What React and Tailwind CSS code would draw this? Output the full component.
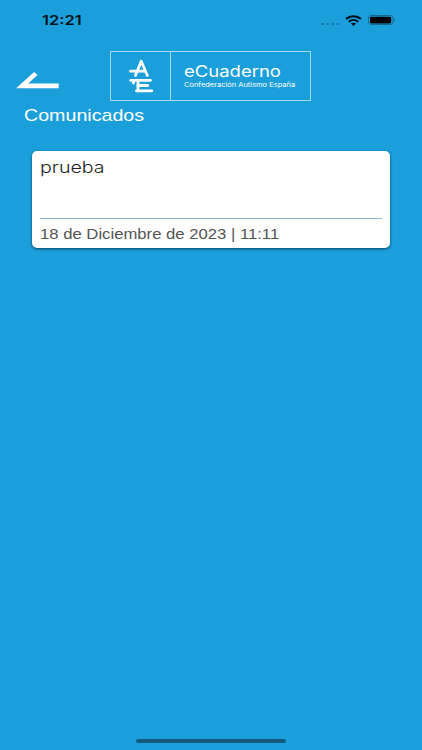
import React from "react";

const comunicados = [
  { id: 1, title: "prueba", date: "18 de Diciembre de 2023 | 11:11" },
];

const StatusBar = () => {
  return (
    <div className="flex h-10 items-center justify-between pl-[42px] pr-[26px]">
      <span className="mt-[2px] origin-left scale-x-[1.22] font-['Inter'] text-[13.5px] font-semibold leading-none text-[#04121c]">
        12:21
      </span>

      <div className="flex items-center">
        {/* No signal */}
        <div className="mt-[7px] flex gap-[2px]">
          <span className="h-[2px] w-[3px] rounded-full bg-[#167bab]" />
          <span className="h-[2px] w-[3px] rounded-full bg-[#167bab]" />
          <span className="h-[2px] w-[3px] rounded-full bg-[#167bab]" />
          <span className="h-[2px] w-[3px] rounded-full bg-[#167bab]" />
        </div>

        {/* Wifi */}
        <svg
          className="ml-[6px] h-[11px] w-[17px]"
          viewBox="0 0 17 11"
          fill="none"
          stroke="#03141f"
          strokeWidth="2"
        >
          <path d="M1 4.1C5.2.2 11.8.2 16 4.1" />
          <path d="M3.8 6.8c2.7-2.4 6.7-2.4 9.4 0" />
          <path
            d="M5.9 8.6c1.5-1.3 3.7-1.3 5.2 0L8.5 11z"
            fill="#03141f"
            stroke="none"
          />
        </svg>

        {/* Battery */}
        <svg className="ml-[6px] h-[10px] w-[28px]" viewBox="0 0 28 10">
          <rect
            x="0.5"
            y="0.5"
            width="24.4"
            height="9"
            rx="2.6"
            fill="none"
            stroke="#13698f"
          />
          <rect x="2" y="1.8" width="21.2" height="6.6" rx="1.3" fill="#000" />
          <path d="M26 3.4c1.4.5 1.4 2.7 0 3.2z" fill="#13698f" />
        </svg>
      </div>
    </div>
  );
};

const Logo = () => {
  return (
    <div className="flex h-[50px] w-[201px] border border-[#a5daf3] text-white">
      <div className="w-[60px] border-r border-[#a5daf3]">
        <svg
          className="h-12 w-[59px]"
          viewBox="0 0 59 48"
          fill="none"
          stroke="#fff"
          strokeWidth="2.8"
          strokeLinecap="round"
          strokeLinejoin="round"
        >
          <path d="M24.5 23.5 30.2 9.2l6.2 14.3" />
          <path d="M19.5 19.2h14.5" />
          <path d="M19.8 28.3h19.6" />
          <path d="M22.5 28.3v2.8M27 28.3v10.5" />
          <path d="M27 33.5h9.8" />
          <path d="M25.4 38.8h15.4" />
        </svg>
      </div>
      <div className="flex flex-col pl-[13px] pt-[9px]">
        <span className="w-max origin-left scale-x-[1.155] font-['Inter'] text-[16px] leading-5">
          eCuaderno
        </span>
        <span className="mt-px w-max origin-left scale-x-[1.15] font-['Inter'] text-[6.5px] leading-[7px]">
          Confederación Autismo España
        </span>
      </div>
    </div>
  );
};

const Header = () => {
  return (
    <header className="flex items-start pl-4 pt-[11px]">
      <button className="mt-[20px]" aria-label="Volver">
        <svg className="h-[18px] w-[43px]" viewBox="0 0 43 18" fill="#fff">
          <path d="M0 17.2 18.2 1l3.3 3-9.3 8.5h30.5v4.7z" />
        </svg>
      </button>
      <div className="ml-[51px]">
        <Logo />
      </div>
    </header>
  );
};

const ComunicadoCard = ({ title, date }) => {
  return (
    <div className="h-[97px] rounded-[5px] bg-white px-2 shadow-[0px_1px_3px_rgba(0,40,65,0.8)]">
      <div className="h-[68px] border-b border-[#8dbbe0] pt-[5px]">
        <p className="w-max origin-left scale-x-[1.19] font-['Inter'] text-[16.5px] font-light leading-[22px] text-[#222]">
          {title}
        </p>
      </div>
      <p className="w-max origin-left scale-x-[1.15] pt-[5px] font-['Liberation_Sans'] text-[14.5px] leading-5 text-[#555]">
        {date}
      </p>
    </div>
  );
};

const App = () => {
  return (
    <div className="flex h-[750px] w-[422px] flex-col overflow-hidden bg-[#1b9fdb] font-['Liberation_Sans',sans-serif]">
      <StatusBar />
      <Header />

      <h1 className="ml-6 mt-1 w-max origin-left scale-x-[1.155] text-[17px] leading-[22px] text-white">
        Comunicados
      </h1>

      <main className="mt-[24px] flex-1 pl-8 pr-8">
        {comunicados.map((item) => (
          <ComunicadoCard key={item.id} title={item.title} date={item.date} />
        ))}
      </main>

      {/* Home indicator */}
      <div className="mb-[7px] ml-[136px] h-1 w-[150px] rounded-full bg-[#155a7c]" />
    </div>
  );
};

export default App;
